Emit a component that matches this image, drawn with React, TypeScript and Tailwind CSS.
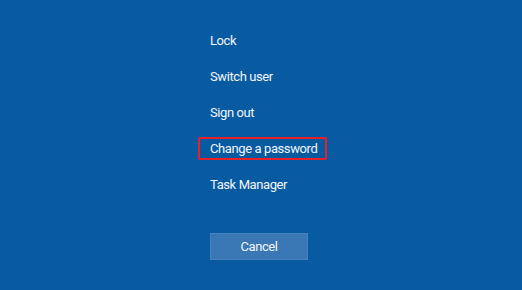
import React from "react";

export default function App() {
  const items = ["Lock", "Switch user", "Sign out", "Change a password", "Task Manager"];
  return (
    <div className="w-[522px] h-[290px] bg-[#085aa1] overflow-hidden" style={{ fontFamily: 'Roboto, "Noto Sans", sans-serif' }}>
      <div className="pl-[210px] pt-[23px] flex flex-col">
        {items.map((t) => (
          <div key={t} className="h-[36px] flex items-center text-[13px] tracking-[-0.4px] text-[#f2f6fb] relative">
            {t === "Change a password" && (
              <div className="absolute left-[-12px] top-[6px] w-[129px] h-[23px] border-2 border-[#e8202a] rounded-[2px]" />
            )}
            <span className="relative">{t}</span>
          </div>
        ))}
        <div className="mt-[30px] w-[98px] h-[27px] bg-[#3a78b5] border border-[#4683bd] flex items-center justify-center text-[13px] tracking-[-0.4px] text-[#f2f6fb]">
          Cancel
        </div>
      </div>
    </div>
  );
}
